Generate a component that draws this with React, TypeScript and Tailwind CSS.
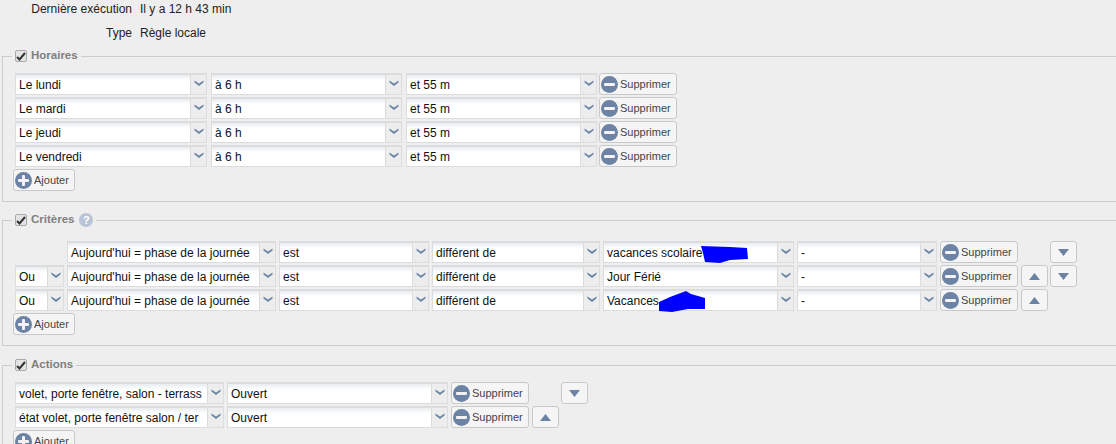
import { ReactNode } from 'react';

const font = 'font-["Liberation_Sans",sans-serif]';

function Chevron() {
  return (
    <svg width="10" height="7" viewBox="0 0 10 7" className="block">
      <path d="M0.5 0.5 L5 3.5 L9.5 0.5 L9.5 2.5 L5 6 L0.5 2.5 Z" fill="#6f87a6" />
    </svg>
  );
}

function Select({ value, className, mask }: { value: string; className: string; mask?: ReactNode }) {
  return (
    <div className={`relative flex h-[22px] shrink-0 border border-t-2 border-[#dcdcdc] bg-white ${className}`}>
      <div className="flex min-w-0 flex-1 items-center overflow-hidden whitespace-nowrap bg-gradient-to-b from-[#e9edf0] via-white via-30% to-white pl-[3px] text-[12px] text-[#111]">
        {value}
      </div>
      <div className="flex w-[16px] shrink-0 items-center justify-center border-l border-[#dcdcdc] bg-[#ededed] pb-[2px]">
        <Chevron />
      </div>
      {mask}
    </div>
  );
}

function RoundIcon({ plus }: { plus?: boolean }) {
  return (
    <svg width="17" height="17" viewBox="0 0 17 17" className="block shrink-0">
      <circle cx="8.5" cy="8.5" r="8.5" fill="#6c83a5" />
      <rect x="3" y="7" width="11" height="3" rx="1" fill="#f2f2f2" />
      {plus && <rect x="7" y="3" width="3" height="11" rx="1" fill="#f2f2f2" />}
    </svg>
  );
}

function IconButton({ label, plus }: { label: string; plus?: boolean }) {
  return (
    <button className={`flex h-[22px] shrink-0 items-center gap-[2px] rounded-[3px] border border-[#c8c8c8] bg-[#f5f5f5] pl-[1px] text-[11px] text-[#444] ${plus ? 'w-[62px]' : 'w-[78px]'}`}>
      <RoundIcon plus={plus} />
      {label}
    </button>
  );
}

function ArrowButton({ up }: { up?: boolean }) {
  return (
    <button className="flex h-[22px] w-[27px] shrink-0 items-center justify-center rounded-[3px] border border-[#c8c8c8] bg-[#f5f5f5]">
      <svg width="11" height="7" viewBox="0 0 11 7" className="block">
        <path d={up ? 'M5.5 0 L11 7 L0 7 Z' : 'M0 0 L11 0 L5.5 7 Z'} fill="#6c83a5" />
      </svg>
    </button>
  );
}

function Legend({ title, help }: { title: string; help?: boolean }) {
  return (
    <legend className="-ml-[3px] flex h-[16px] items-center px-[3px]">
      <span className="flex h-[12px] w-[12px] items-center justify-center rounded-[2px] border border-[#aaa] bg-[#e4e4e4]">
        <svg width="10" height="9" viewBox="0 0 10 9" className="block">
          <path d="M1 5 L3.5 7.5 L9 1" fill="none" stroke="#333" strokeWidth="2" />
        </svg>
      </span>
      <span className="ml-[4px] text-[11.5px] font-bold text-[#808080]">{title}</span>
      {help && (
        <span className="ml-[5px] flex h-[14px] w-[14px] items-center justify-center rounded-full bg-[#b9c4d6] text-[11px] font-bold leading-none text-white">
          ?
        </span>
      )}
    </legend>
  );
}

function AddButton() {
  return (
    <div className="-ml-[2px]">
      <IconButton label="Ajouter" plus />
    </div>
  );
}

function Scribble({ d, className }: { d: string; className: string }) {
  return (
    <svg viewBox="0 0 50 22" className={`absolute h-[22px] w-[50px] ${className}`}>
      <path d={d} fill="#0000ff" />
    </svg>
  );
}

const days = ['Le lundi', 'Le mardi', 'Le jeudi', 'Le vendredi'];

const criteria = [
  { op: '', value: 'vacances scolaire', up: false, down: true, mask: <Scribble className="left-[96px] top-[2px]" d="M1 1 L30 2 L47 3 L48 14 L30 15 L20 18 L5 17 L3 8 Z" /> },
  { op: 'Ou', value: 'Jour Férié', up: true, down: true },
  { op: 'Ou', value: 'Vacances', up: true, down: false, mask: <Scribble className="left-[54px] top-[-1px]" d="M1 12 L12 7 L28 1 L33 4 L47 8 L47 19 L30 19 L14 22 L1 21 Z" /> },
];

const actions = [
  { name: 'volet, porte fenêtre, salon - terrass', up: false, down: true },
  { name: 'état volet, porte fenêtre salon / ter', up: true, down: false },
];

export default function App() {
  return (
    <div className={`h-[444px] w-[1116px] overflow-hidden bg-[#eeeeee] ${font}`}>
      <div className="flex h-[17px] items-center text-[12px] text-[#222]">
        <div className="w-[132px] text-right">Dernière exécution</div>
        <div className="ml-[8px]">Il y a 12 h 43 min</div>
      </div>
      <div className="flex h-[31px] items-center pt-[1px] text-[12px] text-[#222]">
        <div className="w-[132px] text-right">Type</div>
        <div className="ml-[8px]">Règle locale</div>
      </div>

      <fieldset className="ml-[2px] mr-[-4px] h-[154px] border border-[#cccccc] pl-[12px] pt-[9px]">
        <Legend title="Horaires" />
        <div className="flex flex-col gap-[2px]">
          {days.map((day) => (
            <div key={day} className="flex gap-[4px]">
              <Select value={day} className="w-[192px]" />
              <Select value="à 6 h" className="w-[191px]" />
              <Select value="et 55 m" className="w-[191px]" />
              <div className="-ml-[2px]">
                <IconButton label="Supprimer" />
              </div>
            </div>
          ))}
          <AddButton />
        </div>
      </fieldset>

      <fieldset className="ml-[2px] mr-[-4px] mt-[10px] h-[134px] border border-[#cccccc] pl-[12px] pt-[13px]">
        <Legend title="Critères" help />
        <div className="flex flex-col gap-[2px]">
          {criteria.map((row) => (
            <div key={row.value} className="flex gap-[3px]">
              {row.op ? <Select value={row.op} className="w-[49px]" /> : <div className="w-[49px] shrink-0" />}
              <Select value="Aujourd'hui = phase de la journée" className="w-[209px]" />
              <Select value="est" className="w-[150px]" />
              <Select value="différent de" className="w-[168px]" />
              <Select value={row.value} className="w-[191px]" mask={row.mask} />
              <Select value="-" className="w-[140px]" />
              <div className="flex gap-[2px]">
                <div className="mr-[1px]">
                  <IconButton label="Supprimer" />
                </div>
                {row.up ? <ArrowButton up /> : <div className="w-[27px] shrink-0" />}
                {row.down && <ArrowButton />}
              </div>
            </div>
          ))}
          <AddButton />
        </div>
      </fieldset>

      <fieldset className="ml-[2px] mr-[-4px] mt-[11px] h-[100px] border border-[#cccccc] pl-[12px] pt-[9px]">
        <Legend title="Actions" />
        <div className="flex flex-col gap-[2px]">
          {actions.map((row) => (
            <div key={row.name} className="flex gap-[3px]">
              <Select value={row.name} className="w-[209px]" />
              <Select value="Ouvert" className="w-[221px]" />
              <div className="flex gap-[2px]">
                <div className="mr-[1px]">
                  <IconButton label="Supprimer" />
                </div>
                {row.up ? <ArrowButton up /> : <div className="w-[27px] shrink-0" />}
                {row.down && <ArrowButton />}
              </div>
            </div>
          ))}
          <AddButton />
        </div>
      </fieldset>
    </div>
  );
}
